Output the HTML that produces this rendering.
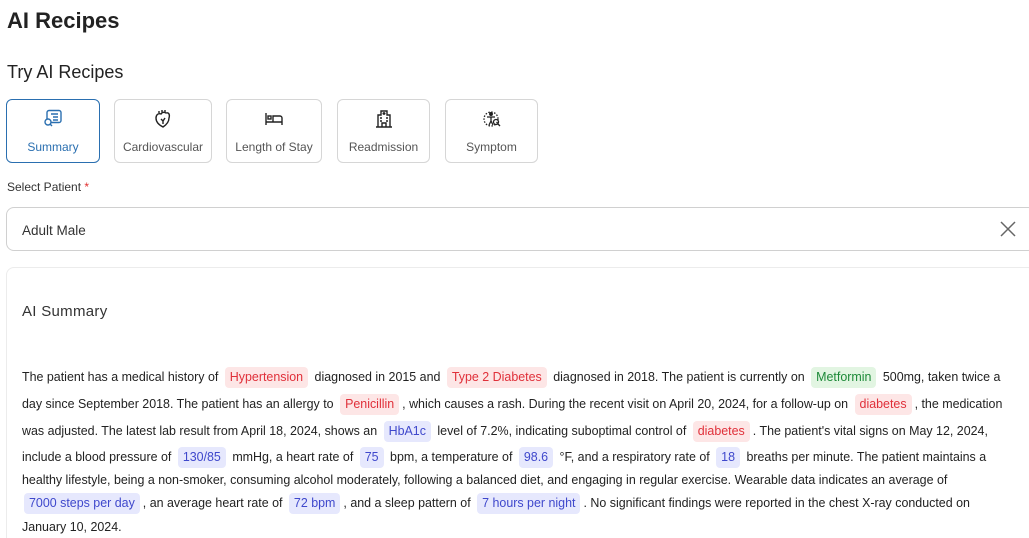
<!DOCTYPE html>
<html><head><meta charset="utf-8"><style>
*{box-sizing:border-box;margin:0;padding:0}
html,body{width:1029px;height:538px;overflow:hidden}
body{background:#fff;font-family:"Liberation Sans",sans-serif;color:#222;position:relative}
.a{position:absolute;white-space:nowrap}
h1{position:absolute;left:7px;top:8px;font-size:22px;font-weight:bold;color:#222}
h2{position:absolute;left:7px;top:62px;font-size:18px;font-weight:normal;color:#222}
.card{position:absolute;top:99px;height:64px;border:1px solid #d6d6d6;border-radius:6px;text-align:center;font-size:12px;color:#555}
.card svg{position:absolute;left:50%;top:9px;margin-left:-10px}
.card span{position:absolute;left:0;right:0;top:40px}
.sel{border-color:#2a6fb0;color:#2a6fb0}
.input{position:absolute;left:6px;top:207px;width:1030px;height:44px;border:1px solid #d0d0d0;border-radius:8px}
.panel{position:absolute;left:6px;top:267px;width:1030px;height:320px;border:1px solid #ececec;border-radius:8px}
.ln{position:absolute;left:22px;font-size:12.45px;color:#222;white-space:nowrap;line-height:20px}
.c{display:inline-block;padding:0 5px;border-radius:4px;margin:0 3px;line-height:21px}
.r{background:#fde6e6;color:#e0303a}
.g{background:#e2f5e2;color:#1d8a38}
.b{background:#e6e8fd;color:#3f48cc}
</style></head><body>
<h1>AI Recipes</h1>
<h2>Try AI Recipes</h2>
<div class="card sel" style="left:6px;width:94px">
<svg width="20" height="20" viewBox="0 0 20 20" fill="none" stroke="#2a6fb0" stroke-width="1.4"><rect x="4" y="1.5" width="14" height="12" rx="2"/><path d="M8 5h7M10 8h5M10 11h5"/><circle cx="5" cy="13" r="3" fill="#fff"/><path d="M7 15l2 2"/></svg>
<span>Summary</span></div>
<div class="card" style="left:114px;width:98px">
<svg width="20" height="20" viewBox="0 0 20 20" fill="none" stroke="#222" stroke-width="1.4"><path d="M10 18c-4-2-7-5-7-9 0-3 2-5 5-4 1-2 3-2 5-1 3-1 4 2 3 5 0 4-3 7-6 9z"/><path d="M6 4V2M9 3V1M12 3V1M8 10l2 2 2-3M10 12v3"/></svg>
<span>Cardiovascular</span></div>
<div class="card" style="left:226px;width:96px">
<svg width="20" height="20" viewBox="0 0 20 20" fill="none" stroke="#222" stroke-width="1.4"><path d="M2 4v12M2 13h16v3M18 13V9a2 2 0 0 0-2-2H9v6"/><rect x="4" y="7" width="3" height="3"/></svg>
<span>Length of Stay</span></div>
<div class="card" style="left:337px;width:93px">
<svg width="20" height="20" viewBox="0 0 20 20" fill="none" stroke="#222" stroke-width="1.4"><path d="M4 18V6h3V2h6v4h3v12M2 18h16M8 18v-4h4v4M10 3v3M8.5 4.5h3M6 9h2M12 9h2M6 12h2M12 12h2"/></svg>
<span>Readmission</span></div>
<div class="card" style="left:445px;width:93px">
<svg width="20" height="20" viewBox="0 0 20 20" fill="none" stroke="#222" stroke-width="1.3"><circle cx="9" cy="10" r="7" stroke-dasharray="1.5 1.5"/><circle cx="9" cy="5" r="1.3" fill="#222"/><path d="M5 8h8M9 8v4M7 16l2-4 2 4"/><circle cx="14" cy="13" r="2.5"/><path d="M16 15l2 2"/></svg>
<span>Symptom</span></div>
<div class="a" style="left:7px;top:180px;font-size:12px;color:#333">Select Patient <span style="color:#e03030">*</span></div>
<div class="input"><div class="a" style="left:15px;top:15px;font-size:13.5px;color:#333">Adult Male</div>
<svg class="a" style="left:993px;top:13px" width="16" height="16" viewBox="0 0 16 16" stroke="#666" stroke-width="1.5"><path d="M1 1l14 14M15 1L1 15"/></svg></div>
<div class="panel"></div>
<div class="a" style="left:22px;top:303px;font-size:15px;color:#333;letter-spacing:.3px">AI Summary</div>
<div class="ln" style="top:367px">The patient has a medical history of <span class="c r">Hypertension</span> diagnosed in 2015 and <span class="c r">Type 2 Diabetes</span> diagnosed in 2018. The patient is currently on <span class="c g">Metformin</span> 500mg, taken twice a</div>
<div class="ln" style="top:394px">day since September 2018. The patient has an allergy to <span class="c r">Penicillin</span>, which causes a rash. During the recent visit on April 20, 2024, for a follow-up on <span class="c r">diabetes</span>, the medication</div>
<div class="ln" style="top:421px">was adjusted. The latest lab result from April 18, 2024, shows an <span class="c b">HbA1c</span> level of 7.2%, indicating suboptimal control of <span class="c r">diabetes</span>. The patient's vital signs on May 12, 2024,</div>
<div class="ln" style="top:447px">include a blood pressure of <span class="c b">130/85</span> mmHg, a heart rate of <span class="c b">75</span> bpm, a temperature of <span class="c b">98.6</span> °F, and a respiratory rate of <span class="c b">18</span> breaths per minute. The patient maintains a</div>
<div class="ln" style="top:470px">healthy lifestyle, being a non-smoker, consuming alcohol moderately, following a balanced diet, and engaging in regular exercise. Wearable data indicates an average of</div>
<div class="ln" style="top:493px;left:21px"><span class="c b">7000 steps per day</span>, an average heart rate of <span class="c b">72 bpm</span>, and a sleep pattern of <span class="c b">7 hours per night</span>. No significant findings were reported in the chest X-ray conducted on</div>
<div class="ln" style="top:517px">January 10, 2024.</div>
</body></html>
